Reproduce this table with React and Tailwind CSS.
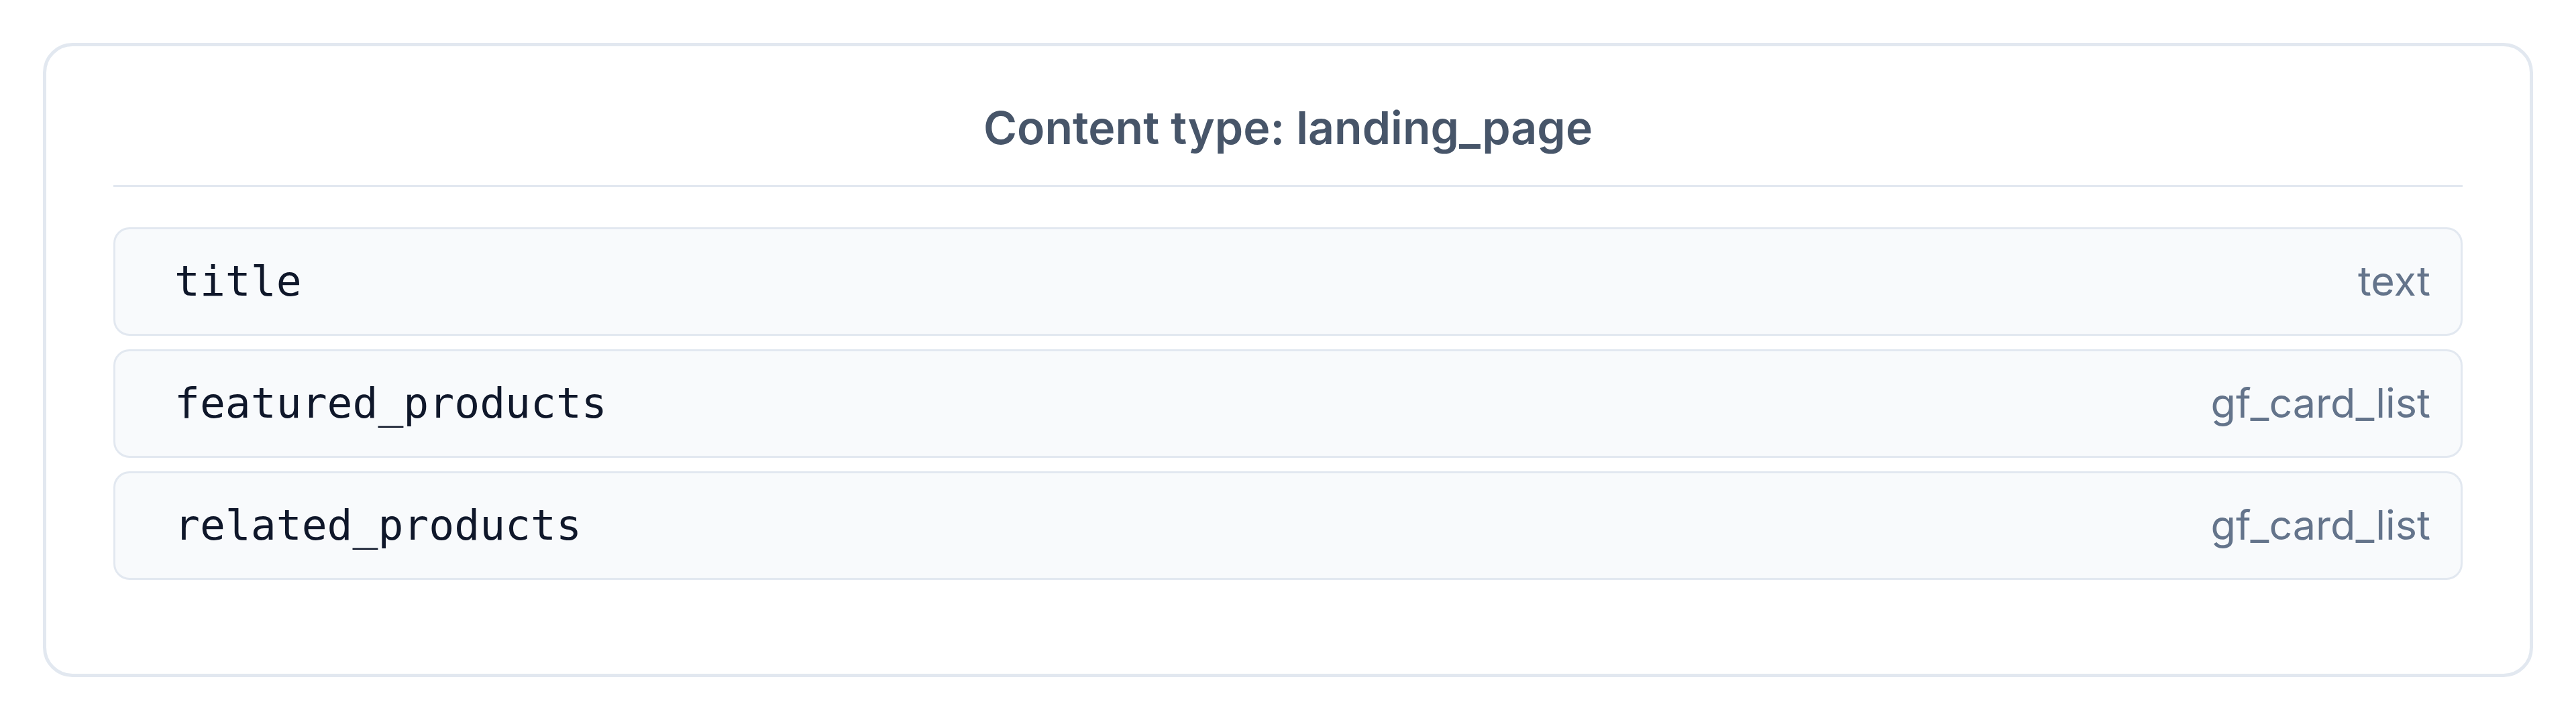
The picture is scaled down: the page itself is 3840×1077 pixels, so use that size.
import React from 'react';

const fields = [
  { name: 'title', type: 'text' },
  { name: 'featured_products', type: 'gf_card_list' },
  { name: 'related_products', type: 'gf_card_list' },
];

export default function App() {
  return (
    <main className="min-h-screen bg-white pt-[64px] px-[64px]" style={{ fontFamily: 'Inter, "Noto Sans", sans-serif' }}>
      <section className="border-[5px] border-[#e2e8f0] rounded-[44px] px-[100px] pt-[75px] pb-[140px]">
        <h2 className="text-center text-[68px] leading-[93px] font-semibold text-[#475569] pb-[39px] border-b-[3px] border-[#e2e8f0]">
          Content type: landing_page
        </h2>
        <div className="mt-[60px] flex flex-col gap-[20px]">
          {fields.map(f => (
            <div key={f.name} className="h-[162px] flex items-center justify-between bg-[#f8fafc] border-[3px] border-[#e2e8f0] rounded-[24px] pl-[88px] pr-[45px]">
              <span className="text-[63px] text-[#0f172a]" style={{ fontFamily: '"DejaVu Sans Mono", monospace' }}>{f.name}</span>
              <span className="text-[61px] text-[#64748b]">{f.type}</span>
            </div>
          ))}
        </div>
      </section>
    </main>
  );
}
